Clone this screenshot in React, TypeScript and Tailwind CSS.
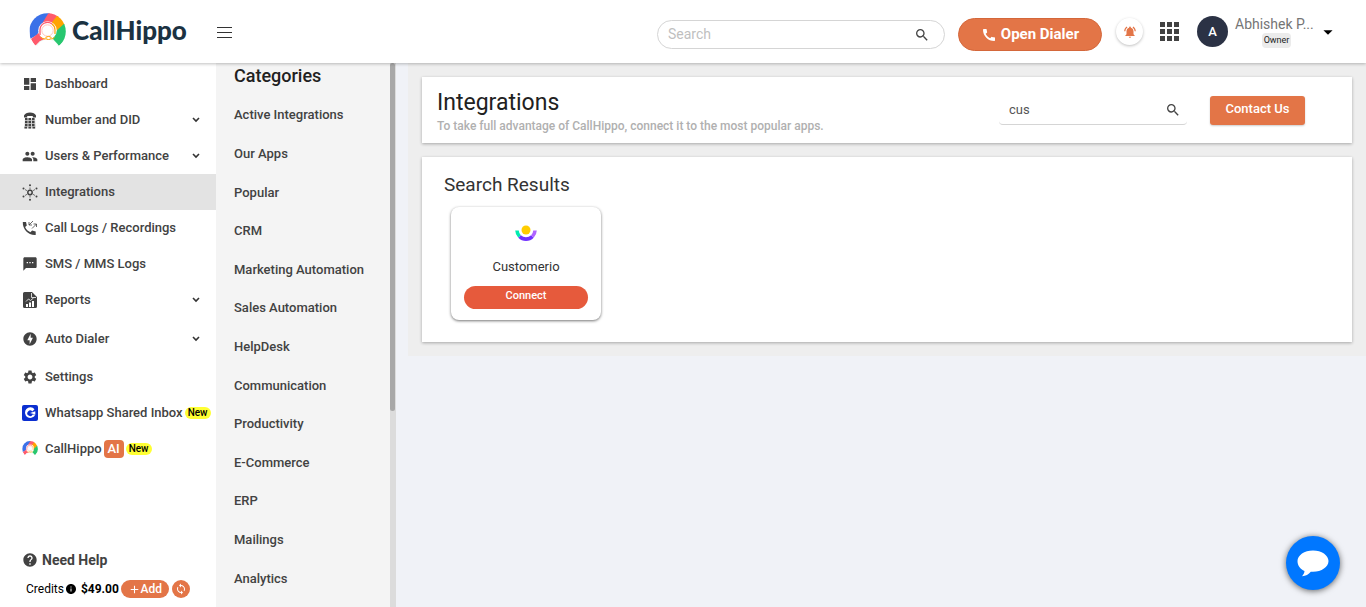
import { useState, type ReactNode } from 'react'
import {
  MdAdd,
  MdArrowDropDown,
  MdCall,
  MdDashboard,
  MdHelp,
  MdInfo,
  MdLoop,
  MdNotificationsActive,
  MdOfflineBolt,
  MdPeople,
  MdSearch,
  MdSettings,
  MdTextsms,
} from 'react-icons/md'

interface NavItem {
  label: string
  icon: ReactNode
  expandable?: boolean
  active?: boolean
  tall?: boolean
  ai?: boolean
  isNew?: boolean
}

const navItems: NavItem[] = [
  { label: 'Dashboard', icon: <MdDashboard size={16} /> },
  { label: 'Number and DID', icon: <DeskPhoneIcon />, expandable: true },
  { label: 'Users & Performance', icon: <MdPeople size={17} />, expandable: true },
  { label: 'Integrations', icon: <HubIcon />, active: true },
  { label: 'Call Logs / Recordings', icon: <CallLogIcon /> },
  { label: 'SMS / MMS Logs', icon: <MdTextsms size={16} /> },
  { label: 'Reports', icon: <ReportIcon />, expandable: true },
  { label: 'Auto Dialer', icon: <MdOfflineBolt size={16} />, expandable: true, tall: true },
  { label: 'Settings', icon: <MdSettings size={16} /> },
  { label: 'Whatsapp Shared Inbox', icon: <InboxIcon />, isNew: true },
  { label: 'CallHippo', icon: <HippoMark size={16} />, ai: true, isNew: true },
]

const categories = [
  'Active Integrations',
  'Our Apps',
  'Popular',
  'CRM',
  'Marketing Automation',
  'Sales Automation',
  'HelpDesk',
  'Communication',
  'Productivity',
  'E-Commerce',
  'ERP',
  'Mailings',
  'Analytics',
]

const integrations = [{ name: 'Customerio', logo: <CustomerioLogo /> }]

export default function App() {
  return (
    <div className="flex h-screen flex-col overflow-hidden bg-[#f0f2f7] font-['Roboto',sans-serif] text-[#424242]">
      <Header />
      <div className="flex min-h-0 flex-1">
        <Sidebar />
        <Categories />
        <main className="min-w-0 flex-1 pl-3">
          <IntegrationsPage />
        </main>
      </div>
      <button
        aria-label="Open chat"
        className="fixed right-[26px] bottom-[17px] flex size-[54px] items-center justify-center rounded-full bg-[#0077ff] shadow-[0_1px_6px_rgba(0,0,0,0.6)]"
      >
        <ChatIcon />
      </button>
    </div>
  )
}

function Header() {
  const [search, setSearch] = useState('')

  return (
    <header className="z-10 flex h-[63px] shrink-0 items-center bg-white shadow-[0_1px_3px_rgba(0,0,0,0.25)]">
      <a href="#" className="ml-[29px] flex items-center gap-[6px]">
        <HippoMark size={37} />
        <span className="pb-1 font-['Lato',sans-serif] text-[26px] leading-8 font-black text-[#1b3242]">
          CallHippo
        </span>
      </a>
      <button aria-label="Toggle menu" className="ml-[30px]">
        <svg width="15" height="12" viewBox="0 0 15 12" stroke="#333" strokeWidth="1.2">
          <path d="M0 1.5h15M0 6.5h15M0 11.5h15" />
        </svg>
      </button>

      <div className="mt-[6px] ml-auto flex h-[29px] w-[288px] items-center rounded-full border border-[#d5d5d5] pr-[14px] pl-[10px]">
        <input
          aria-label="Search"
          placeholder="Search"
          value={search}
          onChange={(e) => setSearch(e.target.value)}
          className="min-w-0 flex-1 pb-[2px] text-sm outline-none placeholder:text-[#bfbfbf]"
        />
        <MdSearch size={16} className="text-[#444]" />
      </div>

      <button className="mt-[6px] ml-[13px] flex h-[33px] w-[144px] items-center justify-center gap-1 rounded-full border border-[#d4673a] bg-[#e37547] text-[15px] font-bold text-white">
        <MdCall size={16} />
        Open Dialer
      </button>
      <button
        aria-label="Notifications"
        className="ml-[14px] flex size-[27px] items-center justify-center rounded-full bg-white text-[#e37547] shadow-[0_1px_3px_rgba(0,0,0,0.25)]"
      >
        <MdNotificationsActive size={14} />
      </button>
      <button aria-label="Apps" className="ml-[17px]">
        <AppsIcon />
      </button>
      <div className="ml-[18px] flex size-[31px] items-center justify-center rounded-full bg-[#2b3245] text-[13px] font-medium text-white">
        A
      </div>
      <div className="ml-[7px] flex w-[83px] flex-col items-center">
        <span className="self-start text-sm leading-[17px] text-[#757575]">Abhishek P...</span>
        <span className="rounded bg-[#ebebeb] px-[2px] text-[9px] leading-[15px] text-[#222]">Owner</span>
      </div>
      <button aria-label="Account menu" className="mr-[27px] ml-[-1px] text-black">
        <MdArrowDropDown size={22} />
      </button>
    </header>
  )
}

function Sidebar() {
  return (
    <aside className="flex w-[216px] shrink-0 flex-col bg-white pt-[3px] pb-[9px]">
      <nav>
        {navItems.map((item) => (
          <a
            key={item.label}
            href="#"
            className={`flex items-center pl-[22px] text-[13px] font-medium ${
              item.tall ? 'h-[41px]' : 'h-9'
            } ${item.active ? 'bg-[#e3e3e3]' : ''}`}
          >
            <span className="mr-[7px] flex w-4 shrink-0 justify-center">{item.icon}</span>
            {item.label}
            {item.ai && (
              <span className="ml-[2px] flex h-[18px] w-5 items-center justify-center rounded bg-[#e37547] text-white">
                AI
              </span>
            )}
            {item.isNew && (
              <span className="ml-[2px] rounded-full bg-[#ffff33] px-[3px] text-[10px] leading-3 text-black">
                New
              </span>
            )}
            {item.expandable && (
              <svg width="8" height="6" viewBox="0 0 8 6" fill="none" stroke="#333" strokeWidth="1.6" className="mr-4 ml-auto">
                <path d="M1 1l3 3 3-3" />
              </svg>
            )}
          </a>
        ))}
      </nav>

      <div className="mt-auto">
        <a href="#" className="flex items-center gap-1 pl-[22px] text-sm font-bold">
          <MdHelp size={16} />
          Need Help
        </a>
        <div className="mt-[10px] flex items-center pl-[26px] text-xs text-black">
          Credits
          <MdInfo size={12} className="ml-[1px]" />
          <span className="ml-1 font-bold">$49.00</span>
          <button className="ml-[2px] flex h-[18px] w-12 items-center justify-center rounded-full bg-[#e37547] font-medium text-white">
            <MdAdd size={13} />
            Add
          </button>
          <button
            aria-label="Refresh credits"
            className="ml-[3px] flex size-[18px] items-center justify-center rounded-full bg-[#e37547] text-white"
          >
            <MdLoop size={12} />
          </button>
        </div>
      </div>
    </aside>
  )
}

function Categories() {
  return (
    <section className="flex w-[180px] shrink-0 overflow-hidden bg-[#f4f4f4]">
      <div className="min-w-0 flex-1 pl-[18px]">
        <h2 className="text-lg leading-[26px] font-medium text-[#212121]">Categories</h2>
        <ul className="mt-[6px] grid h-[502px] auto-rows-fr items-center">
          {categories.map((category) => (
            <li key={category}>
              <a href="#" className="text-[13px] font-medium">
                {category}
              </a>
            </li>
          ))}
        </ul>
      </div>
      {/* Scroll track */}
      <div className="w-[6px] bg-[#dcdcdc]">
        <div className="h-[64%] w-[5px] rounded-full bg-[#a8a8a8]" />
      </div>
    </section>
  )
}

function IntegrationsPage() {
  const [query, setQuery] = useState('cus')
  const results = integrations.filter((i) => i.name.toLowerCase().includes(query.toLowerCase()))

  return (
    <div className="space-y-[14px] bg-[#eeeeee] p-[14px]">
      <div className="flex h-[66px] items-center bg-white pr-[47px] pl-[15px] shadow-[0_1px_3px_rgba(0,0,0,0.3)]">
        <div className="pt-[5px]">
          <h1 className="text-[23px] leading-[27px] text-[#212121]">Integrations</h1>
          <p className="text-xs leading-5 font-medium text-[#b0b0b0]">
            To take full advantage of CallHippo, connect it to the most popular apps.
          </p>
        </div>
        <div className="ml-auto flex h-[29px] w-[188px] items-center rounded border-b border-[#d5d5d5] pr-[6px] pl-[10px]">
          <input
            aria-label="Search integrations"
            value={query}
            onChange={(e) => setQuery(e.target.value)}
            className="min-w-0 flex-1 text-[13px] text-[#555] outline-none"
          />
          <MdSearch size={16} className="text-[#444]" />
        </div>
        <button className="ml-[23px] h-[29px] w-[95px] rounded-[3px] bg-[#e37547] pb-[2px] text-[13px] font-medium text-white shadow-[0_1px_2px_rgba(0,0,0,0.2)]">
          Contact Us
        </button>
      </div>

      <div className="bg-white px-[22px] pt-[15px] pb-[22px] shadow-[0_1px_3px_rgba(0,0,0,0.3)]">
        <h2 className="text-[19px] leading-[26px] text-[#333]">Search Results</h2>
        <div className="mt-[9px] flex flex-wrap gap-4 pl-[7px]">
          {results.map((result) => (
            <div
              key={result.name}
              className="flex h-[113px] w-[150px] flex-col items-center rounded-lg bg-white px-[13px] pt-[17px] shadow-[0_1px_3px_rgba(0,0,0,0.55)]"
            >
              {result.logo}
              <p className="mt-[15px] text-[13px] leading-5 text-[#333]">{result.name}</p>
              <button className="mt-[9px] h-[23px] w-full rounded-full bg-[#e65a3c] pb-[2px] text-[11px] font-medium text-white">
                Connect
              </button>
            </div>
          ))}
        </div>
      </div>
    </div>
  )
}

function HippoMark({ size }: { size: number }) {
  return (
    <svg width={size} height={size} viewBox="0 0 37 37" fill="none">
      <clipPath id="hippo-disc">
        <circle cx="18.5" cy="18.5" r="18.3" />
      </clipPath>
      <g clipPath="url(#hippo-disc)">
        <path d="M0 0h21L8 22 1 26z" fill="#3b71e8" />
        <path d="M19.500 0H31l-6 14H11z" fill="#ff5a6c" />
        <path d="M30 0l6 11-9 10-6-9z" fill="#ffa400" />
        <path d="M37 9v17l-7 7-6-7 1-6z" fill="#28c76f" />
        <path d="M2 26l9-7 6 8-6 1-5 5z" fill="#ff5a6c" />
        <path d="M7 34q4-8 11.500-8T30 34" stroke="#d9f3e5" strokeWidth=".5" fill="#fff" />
      </g>
      <circle cx="18.500" cy="17.500" r="9.300" fill="#fff" />
      <path d="M11 22v-5a7.500 7.500 0 0 1 12-6" stroke="#ff5a6c" strokeWidth="1.300" />
      <path d="M23 11a7.500 7.500 0 0 1 3 6v4" stroke="#ffa400" strokeWidth="1.200" />
      <path d="M11.500 24q2 2 5 2M25.500 24q-1 2-3 2" stroke="#ffa400" />
      <circle cx="18.500" cy="17.500" r="5.700" stroke="#ffb0a0" strokeWidth=".7" />
      <ellipse cx="19.500" cy="25" rx="2.800" ry="1.500" fill="#fff" stroke="#ffa400" />
    </svg>
  )
}

function AppsIcon() {
  return (
    <svg width="19" height="19" viewBox="0 0 19 19" fill="#424242">
      {[0, 7, 14].map((y) => [0, 7, 14].map((x) => <rect key={`${x}-${y}`} x={x} y={y} width="5" height="5" />))}
    </svg>
  )
}

function DeskPhoneIcon() {
  return (
    <svg width="14" height="17" viewBox="0 0 14 17" fill="currentColor">
      <path d="M1 5.5v-2C2 1.500 4 .5 7 .5s5 1 6 3v2H9.800V4H4.200v1.500z" />
      <path d="M2 6.500h10l.8 10H1.200z" opacity=".25" />
      {[6, 9, 12].map((y) => [2, 5.5, 9].map((x) => <rect key={`${x}-${y}`} x={x} y={y} width="2.5" height="2.2" />))}
      {[1.5, 5.5, 9.5].map((x) => (
        <rect key={x} x={x} y="14.8" width="2.5" height="1.7" />
      ))}
    </svg>
  )
}

function HubIcon() {
  return (
    <svg width="16" height="17" viewBox="0 0 16 17" fill="none" stroke="currentColor">
      <circle cx="8" cy="8.5" r="2.2" strokeWidth="1.5" />
      <path d="M8 3.500v2M8 11.500v2M3 5.500l2 1.200M13 5.500l-2 1.200M3 11.500l2-1.200M13 11.500l-2-1.200" strokeWidth=".7" />
      <g fill="currentColor" stroke="none">
        <circle cx="8" cy="1.3" r="1" />
        <circle cx="8" cy="15.7" r="1" />
        <circle cx="1.5" cy="4.500" r="1" />
        <circle cx="14.5" cy="4.500" r="1" />
        <circle cx="1.5" cy="12.500" r="1" />
        <circle cx="14.5" cy="12.500" r="1" />
      </g>
    </svg>
  )
}

function CallLogIcon() {
  return (
    <svg width="16" height="16" viewBox="0 0 16 16" fill="none" stroke="currentColor">
      <path
        d="M.8 2h3.200l.8 3.400-1.700 1.700c1 2.300 3 4.300 5.300 5.200l1.700-1.700 3.600.8v3.600C6.500 15.500.5 9.500.8 2z"
        fill="currentColor"
        stroke="none"
      />
      <path d="M11 1L7 5M7 2v3h3M10 8.500L14.500 4M11.500 4h3v3" strokeWidth=".8" />
    </svg>
  )
}

function ReportIcon() {
  return (
    <svg width="14" height="16" viewBox="0 0 14 16">
      <path
        d="M1.500 0H9l5 5v9.500a1.500 1.500 0 0 1-1.500 1.500h-11A1.500 1.500 0 0 1 0 14.500v-13A1.500 1.500 0 0 1 1.500 0z"
        fill="currentColor"
      />
      <path d="M8.500 1v4.500H13M3 9.500L5.500 7l2 1.500 3-2.500" fill="none" stroke="#fff" strokeWidth=".8" />
      <path d="M3 15v-3h2v3zM6 15v-4.500h2V15zM9 15V9h2v6z" fill="#fff" />
    </svg>
  )
}

function InboxIcon() {
  return (
    <svg width="16" height="16" viewBox="0 0 16 16">
      <rect width="16" height="16" rx="2" fill="#0b2fd0" />
      <path d="M12.500 4.300A5.300 5.300 0 1 0 13.300 9.500H10.700A2.800 2.800 0 1 1 10.300 6.400z" fill="#fff" />
      <path d="M8 8l5.300-1.700v3.200z" fill="#fff" />
    </svg>
  )
}

function CustomerioLogo() {
  return (
    <svg width="22" height="18" viewBox="0 0 22 18" fill="none" strokeWidth="3.6">
      <path d="M2 6.500A9 9 0 0 0 4.600 12.500" stroke="#00ebb0" />
      <path d="M4.600 12.500A9 9 0 0 0 17.400 12.500" stroke="#7131ff" />
      <path d="M17.400 12.500A9 9 0 0 0 20 6.500" stroke="#af64ff" />
      <circle cx="11" cy="6" r="4.5" fill="#ffcd00" />
    </svg>
  )
}

function ChatIcon() {
  return (
    <svg width="32" height="27" viewBox="0 0 32 27" fill="#fff">
      <path d="M16 .5C24.600.5 31.500 5.200 31.500 11S24.600 21.800 16 21.800c-.8 0-1.500 0-2.200-.1-2.200 2.600-5 4.300-8.800 4.500 1.500-1.400 2.300-3.200 2.500-5.200C3.300 19.200.5 15.500.5 11 .5 5.200 7.400.5 16 .5z" />
    </svg>
  )
}
